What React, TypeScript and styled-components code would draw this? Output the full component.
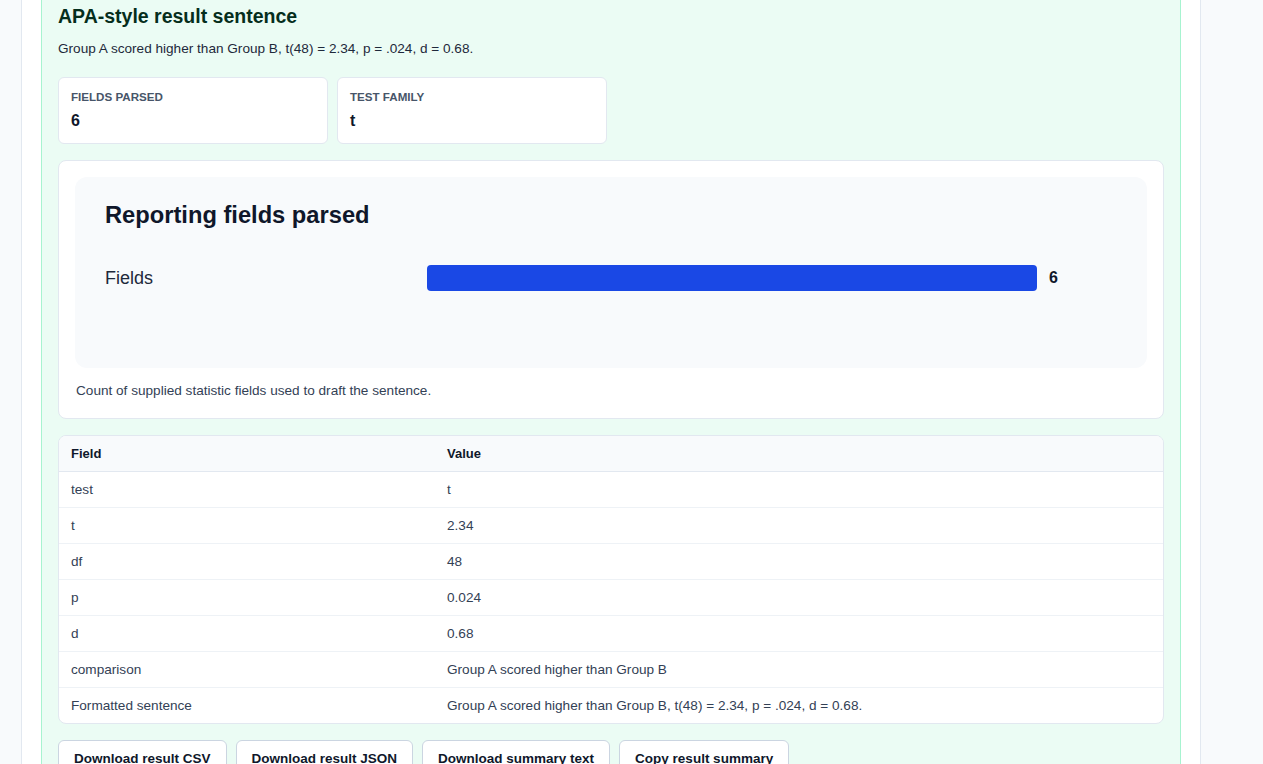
import styled, { createGlobalStyle } from "styled-components"

const GlobalStyle = createGlobalStyle`
  body {
    margin: 0;
    background: #f8fafc;
    font-family: "Liberation Sans", Arial, sans-serif;
    color: #0f172a;
  }
`

const rows = [
  { field: "test", value: "t" },
  { field: "t", value: "2.34" },
  { field: "df", value: "48" },
  { field: "p", value: "0.024" },
  { field: "d", value: "0.68" },
  { field: "comparison", value: "Group A scored higher than Group B" },
  {
    field: "Formatted sentence",
    value: "Group A scored higher than Group B, t(48) = 2.34, p = .024, d = 0.68.",
  },
]

const sentence = "Group A scored higher than Group B, t(48) = 2.34, p = .024, d = 0.68."

const App = () => {
  const fields = 6
  const maxFields = 6
  return (
    <>
      <GlobalStyle />
      <Page>
        <Panel>
          <Result>
            <Title>APA-style result sentence</Title>
            <Sentence>{sentence}</Sentence>
            <Stats>
              <StatCard>
                <StatLabel>Fields parsed</StatLabel>
                <StatValue>{fields}</StatValue>
              </StatCard>
              <StatCard>
                <StatLabel>Test family</StatLabel>
                <StatValue>t</StatValue>
              </StatCard>
            </Stats>
            <ChartCard>
              <ChartArea>
                <ChartTitle>Reporting fields parsed</ChartTitle>
                <BarRow>
                  <BarLabel>Fields</BarLabel>
                  <BarTrack>
                    <Bar style={{ width: `${(fields / maxFields) * 100}%` }} />
                  </BarTrack>
                  <BarValue>{fields}</BarValue>
                </BarRow>
              </ChartArea>
              <Caption>Count of supplied statistic fields used to draft the sentence.</Caption>
            </ChartCard>
            <TableCard>
              <Table>
                <thead>
                  <tr>
                    <Th $first>Field</Th>
                    <Th>Value</Th>
                  </tr>
                </thead>
                <tbody>
                  {rows.map((r) => (
                    <tr key={r.field}>
                      <Td>{r.field}</Td>
                      <Td>{r.value}</Td>
                    </tr>
                  ))}
                </tbody>
              </Table>
            </TableCard>
            <Actions>
              <Button>Download result CSV</Button>
              <Button>Download result JSON</Button>
              <Button>Download summary text</Button>
              <Button>Copy result summary</Button>
            </Actions>
          </Result>
        </Panel>
      </Page>
    </>
  )
}

export default App

const Page = styled.div`
  display: flex;
  padding-left: 21px;
  min-height: 100vh;
`

const Panel = styled.div`
  width: 1140px;
  background: #ffffff;
  border-left: 1px solid #e2e8f0;
  border-right: 1px solid #e2e8f0;
  padding: 0 19px 40px;
`

const Result = styled.section`
  background: #ebfcf4;
  border: 1px solid #a7f3d0;
  border-top: none;
  padding: 4px 16px 16px;
`

const Title = styled.h2`
  margin: 0;
  font-size: 19.5px;
  line-height: 24px;
  font-weight: 700;
  color: #052e1c;
`

const Sentence = styled.p`
  margin: 12px 0 0;
  font-size: 13.6px;
  line-height: 18px;
  color: #1e293b;
`

const Stats = styled.div`
  display: flex;
  gap: 9px;
  margin-top: 19px;
`

const StatCard = styled.div`
  width: 270px;
  box-sizing: border-box;
  height: 67px;
  background: #ffffff;
  border: 1px solid #e2e8f0;
  border-radius: 6px;
  padding: 11px 12px;
`

const StatLabel = styled.div`
  font-size: 11.6px;
  line-height: 16px;
  font-weight: 700;
  text-transform: uppercase;
  color: #475569;
`

const StatValue = styled.div`
  margin-top: 6px;
  font-size: 16px;
  line-height: 20px;
  font-weight: 700;
  color: #0f172a;
`

const ChartCard = styled.div`
  margin-top: 16px;
  background: #ffffff;
  border: 1px solid #e2e8f0;
  border-radius: 8px;
  padding: 16px 16px 18px;
`

const ChartArea = styled.div`
  background: #f8fafc;
  border-radius: 12px;
  height: 191px;
  box-sizing: border-box;
  padding: 24px 30px;
`

const ChartTitle = styled.h3`
  margin: 0;
  font-size: 23.7px;
  line-height: 28px;
  font-weight: 700;
  color: #0f172a;
`

const BarRow = styled.div`
  display: grid;
  grid-template-columns: 322px 1fr 80px;
  align-items: center;
  margin-top: 36px;
`

const BarLabel = styled.div`
  font-size: 18px;
  color: #1e293b;
`

const BarTrack = styled.div`
  height: 26px;
`

const Bar = styled.div`
  height: 100%;
  background: #1a48e5;
  border-radius: 4px;
`

const BarValue = styled.div`
  padding-left: 12px;
  font-size: 16px;
  font-weight: 700;
  color: #0f172a;
`

const Caption = styled.p`
  margin: 14px 0 0 1px;
  font-size: 13.6px;
  line-height: 18px;
  color: #334155;
`

const TableCard = styled.div`
  margin-top: 16px;
  background: #ffffff;
  border: 1px solid #e2e8f0;
  border-radius: 8px;
  overflow: hidden;
`

const Table = styled.table`
  width: 100%;
  border-collapse: collapse;
  font-size: 13.6px;
`

const Th = styled.th<{ $first?: boolean }>`
  width: ${(p) => (p.$first ? "352px" : "auto")};
  text-align: left;
  background: #f8fafc;
  padding: 0 12px;
  height: 35px;
  font-size: 13px;
  font-weight: 700;
  color: #0f172a;
  border-bottom: 1px solid #e2e8f0;
`

const Td = styled.td`
  padding: 0 12px;
  height: 35px;
  color: #334155;
  border-top: 1px solid #eef2f6;
  tr:first-child > & {
    border-top: none;
  }
`

const Actions = styled.div`
  display: flex;
  gap: 9px;
  margin-top: 16px;
`

const Button = styled.button`
  font-family: "Liberation Sans", Arial, sans-serif;
  font-size: 13.5px;
  font-weight: 700;
  color: #0f172a;
  background: #ffffff;
  border: 1px solid #cbd5e1;
  border-radius: 6px;
  padding: 10px 15px;
  cursor: pointer;
`
